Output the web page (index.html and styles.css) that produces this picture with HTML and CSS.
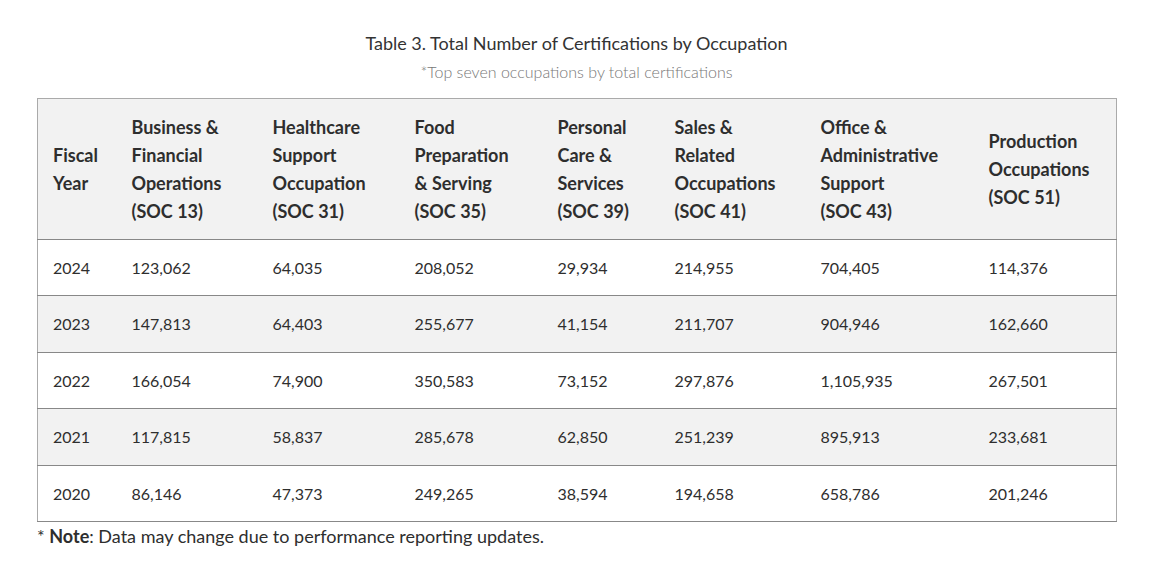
FILE: index.html
```html
<!DOCTYPE html>
<html>
<head>
<meta charset="utf-8">
<link rel="stylesheet" href="styles.css">
</head>
<body>
<div class="wrap">
  <div class="caption">
    <div class="title">Table 3. Total Number of Certifications by Occupation</div>
    <div class="subtitle">*Top seven occupations by total certifications</div>
  </div>
  <table class="data">
    <colgroup>
      <col class="c1"><col class="c2"><col class="c3"><col class="c4"><col class="c5"><col class="c6"><col class="c7"><col class="c8">
    </colgroup>
    <thead>
      <tr>
        <th>Fiscal Year</th>
        <th>Business &amp; Financial Operations (SOC&nbsp;13)</th>
        <th>Healthcare Support Occupation (SOC&nbsp;31)</th>
        <th>Food Preparation &amp;&nbsp;Serving (SOC&nbsp;35)</th>
        <th>Personal Care &amp; Services (SOC&nbsp;39)</th>
        <th>Sales &amp; Related Occupations (SOC&nbsp;41)</th>
        <th>Office &amp; Administrative Support (SOC&nbsp;43)</th>
        <th>Production Occupations (SOC&nbsp;51)</th>
      </tr>
    </thead>
    <tbody>
      <tr><td>2024</td><td>123,062</td><td>64,035</td><td>208,052</td><td>29,934</td><td>214,955</td><td>704,405</td><td>114,376</td></tr>
      <tr class="alt"><td>2023</td><td>147,813</td><td>64,403</td><td>255,677</td><td>41,154</td><td>211,707</td><td>904,946</td><td>162,660</td></tr>
      <tr><td>2022</td><td>166,054</td><td>74,900</td><td>350,583</td><td>73,152</td><td>297,876</td><td>1,105,935</td><td>267,501</td></tr>
      <tr class="alt"><td>2021</td><td>117,815</td><td>58,837</td><td>285,678</td><td>62,850</td><td>251,239</td><td>895,913</td><td>233,681</td></tr>
      <tr><td>2020</td><td>86,146</td><td>47,373</td><td>249,265</td><td>38,594</td><td>194,658</td><td>658,786</td><td>201,246</td></tr>
    </tbody>
  </table>
  <p class="note">* <strong>Note</strong>: Data may change due to performance reporting updates.</p>
</div>
</body>
</html>
```

FILE: styles.css
```css
html, body {
  margin: 0;
  padding: 0;
  background: #ffffff;
}
body {
  font-family: "Lato", "Open Sans", "Liberation Sans", sans-serif;
  color: #2e2e2e;
}
.wrap {
  padding: 31px 0 0 37px;
  width: 1079px;
}
.caption {
  text-align: center;
  margin-bottom: 14px;
}
.title {
  font-size: 18px;
  line-height: 24px;
  color: #333;
}
.subtitle {
  font-size: 16px;
  line-height: 24px;
  color: #777;
  font-weight: 300;
  margin-top: 5px;
}
.data {
  width: 1079px;
  table-layout: fixed;
  border-collapse: collapse;
  border: 1px solid #aaaaaa;
  font-size: 16px;
  line-height: 28px;
}
.c1 { width: 79px; }
.c2 { width: 141px; }
.c3 { width: 142px; }
.c4 { width: 143px; }
.c5 { width: 117px; }
.c6 { width: 146px; }
.c7 { width: 168px; }
.c8 { width: 143px; }
.data th {
  background: #f2f2f2;
  text-align: left;
  font-size: 18px;
  font-weight: 700;
  padding: 14px 15px;
  vertical-align: middle;
  border-bottom: 1px solid #888888;
}
.data td {
  padding: 14px 15px 13.4px;
  border-bottom: 1px solid #888888;
}
.data tr.alt td {
  background: #f2f2f2;
}
.note {
  margin: 3px 0 0 0;
  font-size: 18px;
  line-height: 22px;
}
.note strong { font-weight: 700; }
```
